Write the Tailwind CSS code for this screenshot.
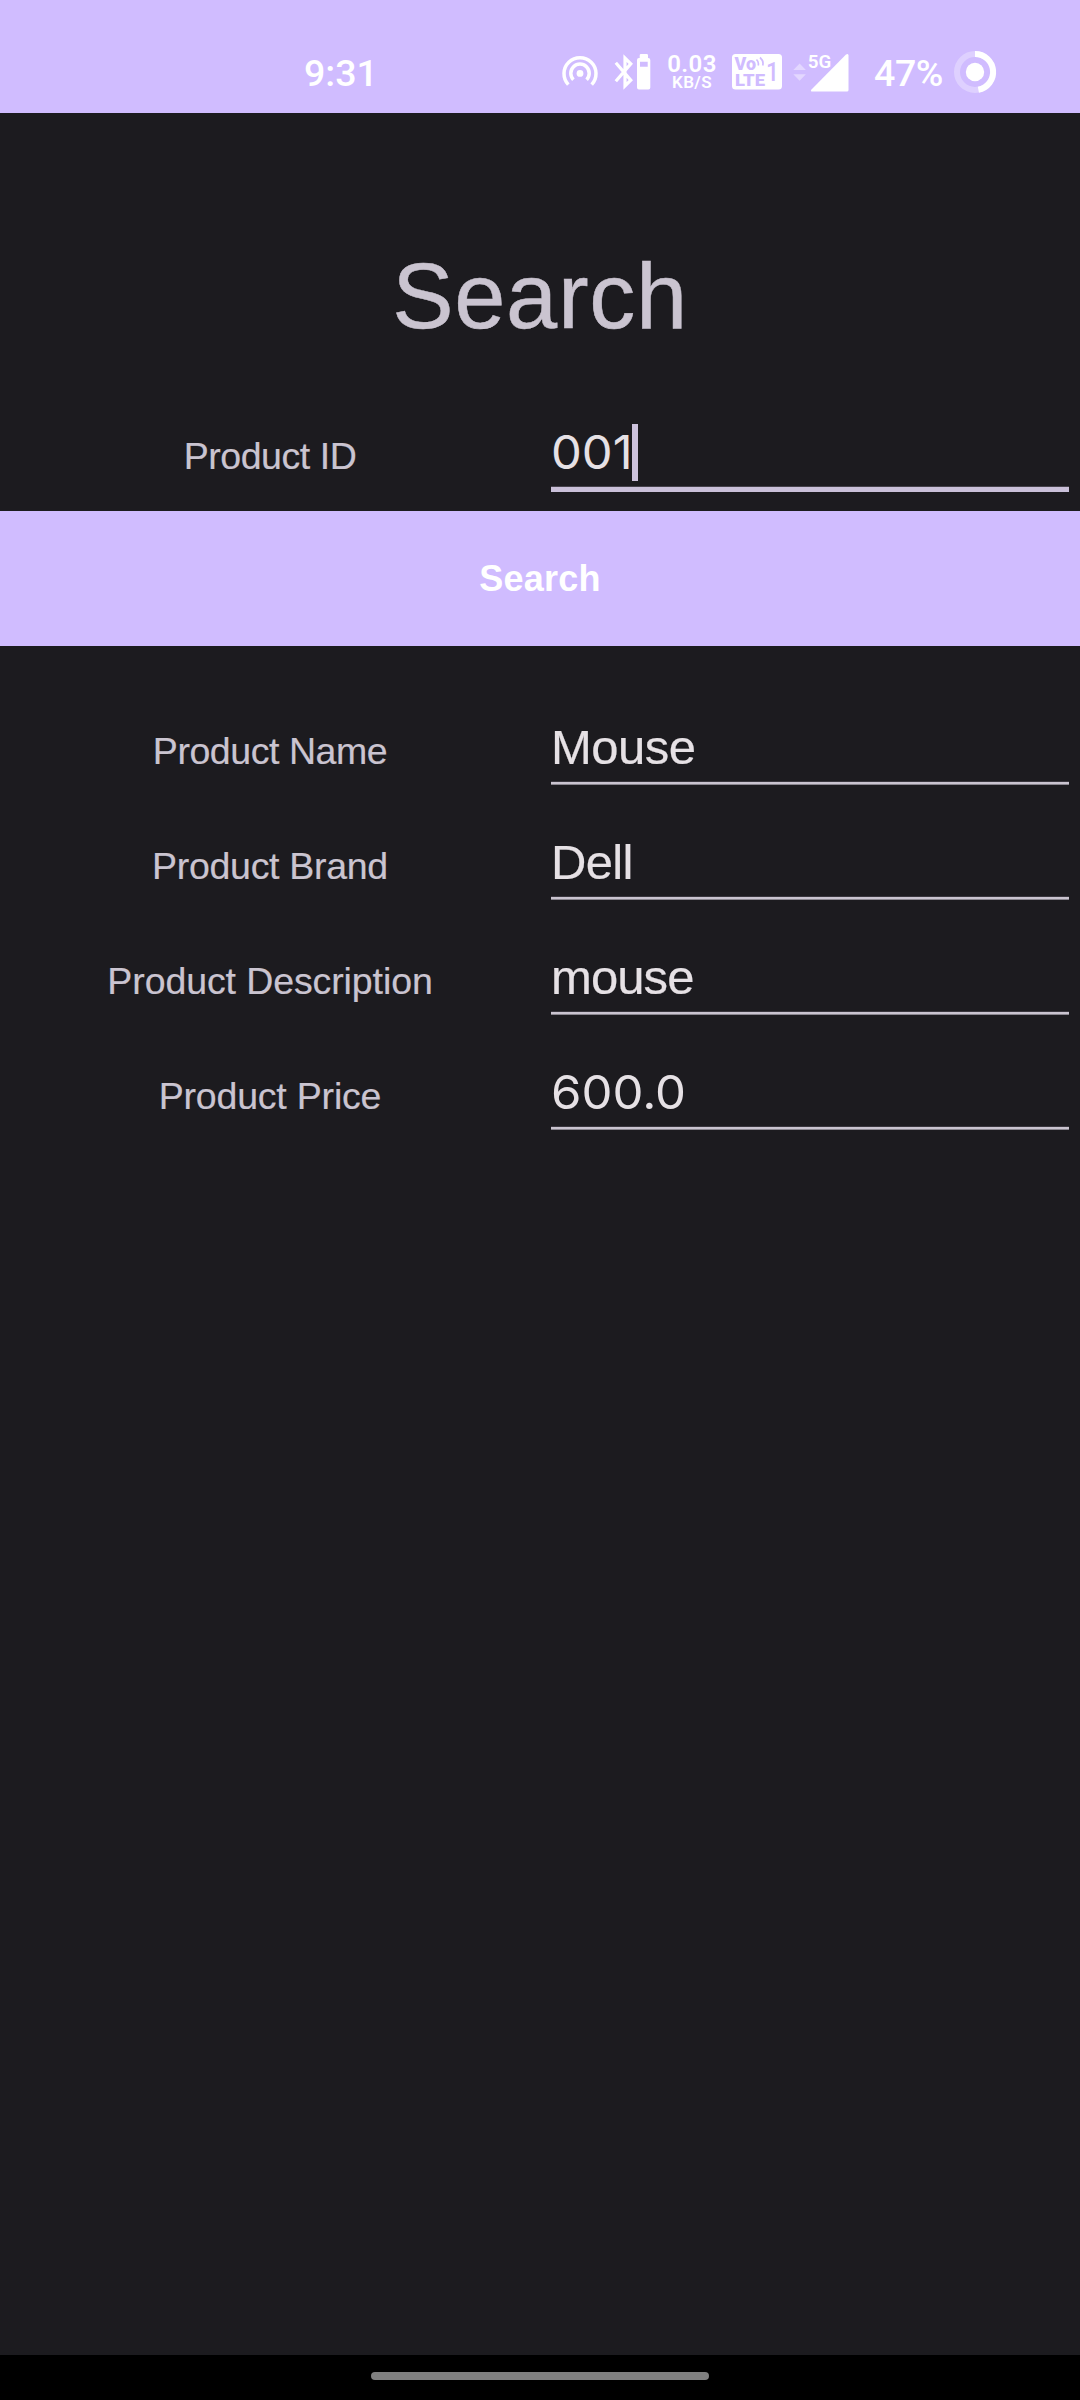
<!DOCTYPE html>
<html lang="en">
<head>
<meta charset="utf-8">
<title>Search</title>
<script src="https://cdn.jsdelivr.net/npm/@tailwindcss/browser@4"></script>
</head>
<body class="bg-[#1c1b1f]">
<div class="flex h-[2400px] w-[1080px] flex-col overflow-hidden bg-[#1c1b1f] font-['Liberation_Sans',Arial,sans-serif] text-[#cac4d0]">

  <!-- Status bar -->
  <header class="flex h-[113px] shrink-0 items-start bg-[#d0bcff] pt-[52px] pl-[304px] text-white">
    <div class="mt-px w-[256px] font-['Roboto',sans-serif] text-[37.5px] leading-10 font-medium">9:31</div>

    <svg class="h-10 w-10 shrink-0" viewBox="560 52 40 40" fill="none" stroke="#fff" stroke-width="3.5">
      <path d="M568.3 84.6A16 16 0 1 1 591.7 84.6"/>
      <path d="M573.4 79.7A9.2 9.2 0 1 1 586.6 79.7"/>
      <circle cx="580" cy="73.4" r="3.4" fill="#fff" stroke="none"/>
    </svg>

    <svg class="ml-3 h-10 w-10 shrink-0" viewBox="612 52 40 40" fill="none">
      <path d="M615.8 62.8L630.8 80.2L625 86V58L630.8 63.8L615.8 81.2" stroke="#fff" stroke-width="3.2"/>
      <path fill="#fff" fill-rule="evenodd" d="M641 54h5.7q1.3 0 1.3 1.3V58h.3q2 0 2 2v27.5q0 2-2 2H639q-2 0-2-2V60q0-2 2-2h.7v-2.7q0-1.3 1.3-1.3zM640 61.7v5h7.7v-5z"/>
    </svg>

    <div class="ml-3.5 flex w-[52px] shrink-0 flex-col items-center pt-[2px] font-['Roboto',sans-serif] font-semibold">
      <span class="text-[24px] leading-5 tracking-[0.4px]">0.03</span>
      <span class="mt-px text-[17px] leading-[15px] tracking-[0.4px]">KB/S</span>
    </div>

    <svg class="ml-3 h-10 w-[54px] shrink-0" viewBox="730 52 54 40">
      <rect x="732" y="54" width="50" height="35.5" rx="3.5" fill="#fff"/>
      <g fill="#d0bcff" font-family="Roboto, sans-serif" font-weight="900">
        <text x="734.5" y="70" font-size="17.5" textLength="21.5" lengthAdjust="spacingAndGlyphs">Vo</text>
        <text x="735" y="86" font-size="17" textLength="30" lengthAdjust="spacingAndGlyphs">LTE</text>
        <text x="766" y="81" font-size="25" font-weight="500" textLength="13" lengthAdjust="spacingAndGlyphs">1</text>
      </g>
      <path d="M756.5 59.5q2.6 2.5 1.7 6M760 57.5q4 3.5 2.7 8" fill="none" stroke="#d0bcff" stroke-width="1.7"/>
    </svg>

    <svg class="ml-2 h-10 w-[60px] shrink-0" viewBox="792 52 60 40" fill="#fff">
      <path d="M799.6 63.5l6.3 6.6h-12.6zM799.6 80.8l6.3-6.6h-12.6z" fill-opacity=".4"/>
      <text x="807.8" y="68" font-family="Roboto, sans-serif" font-weight="600" font-size="18" textLength="23.5" lengthAdjust="spacingAndGlyphs">5G</text>
      <path d="M846 54.6q2.5-1.6 2.5 1V90q0 1.5-1.5 1.5h-34.5q-2.6 0-1-2z"/>
    </svg>

    <div class="mt-px ml-[22px] w-[78px] shrink-0 font-['Roboto',sans-serif] text-[37.5px] leading-10 font-medium tracking-[-0.4px]">47%</div>

    <svg class="-mt-0.5 h-11 w-[46px] shrink-0" viewBox="952 50 46 44" fill="none">
      <circle cx="975" cy="72" r="18" stroke="#fff" stroke-opacity=".3" stroke-width="6"/>
      <path d="M975 54A18 18 0 0 1 978.4 89.7" stroke="#fff" stroke-width="6"/>
      <circle cx="975" cy="72" r="9.2" fill="#fff"/>
    </svg>
  </header>

  <main class="flex grow flex-col">
    <h1 class="h-[283px] pt-[137px] text-center text-[92px] leading-[92px] tracking-[0.7px] [-webkit-text-stroke:0.5px]">Search</h1>

    <div class="grid h-[115px] grid-cols-2">
      <label class="pt-10 text-center text-[37.5px] leading-10 tracking-[-0.45px] [-webkit-text-stroke:0.2px]">Product ID</label>
      <div class="relative pt-9 pr-[11px] pl-[11px] text-[#e6e1e5]">
        <div class="h-[54px] w-fit origin-left scale-x-[1.04] font-['Inter',sans-serif] text-[47px] leading-10">001</div>
        <div class="h-1.5 border-t border-[#45414a] bg-[#cac0d9]"></div>
        <div class="absolute top-7 left-[92px] h-[57px] w-1.5 bg-[#cdc2dc]"></div>
      </div>
    </div>

    <button class="h-[135px] bg-[#d0bcff] text-center text-[36px] leading-10 font-bold tracking-[0.2px] text-white">Search</button>

    <section class="mt-[45px] flex flex-col">
      <div class="grid h-[115px] grid-cols-2">
        <label class="pt-10 text-center text-[37.5px] leading-10 tracking-[-0.45px] [-webkit-text-stroke:0.2px]">Product Name</label>
        <div class="pt-9 pr-[11px] pl-[11px] text-[#e6e1e5]">
          <div class="h-[54px] text-[49px] leading-10 tracking-[-0.5px] [-webkit-text-stroke:0.2px]">Mouse</div>
          <div class="h-1 border-t border-b border-t-[#39363d] border-b-[#8a868f] bg-[#cac4d0]"></div>
        </div>
      </div>
      <div class="grid h-[115px] grid-cols-2">
        <label class="pt-10 text-center text-[37.5px] leading-10 tracking-[-0.3px] [-webkit-text-stroke:0.2px]">Product Brand</label>
        <div class="pt-9 pr-[11px] pl-[11px] text-[#e6e1e5]">
          <div class="h-[54px] text-[49px] leading-10 tracking-[-0.7px] [-webkit-text-stroke:0.2px]">Dell</div>
          <div class="h-1 border-t border-b border-t-[#39363d] border-b-[#8a868f] bg-[#cac4d0]"></div>
        </div>
      </div>
      <div class="grid h-[115px] grid-cols-2">
        <label class="pt-10 text-center text-[37.5px] leading-10 tracking-[-0.1px] [-webkit-text-stroke:0.2px]">Product Description</label>
        <div class="pt-9 pr-[11px] pl-[11px] text-[#e6e1e5]">
          <div class="h-[54px] text-[49px] leading-10 tracking-[-0.9px] [-webkit-text-stroke:0.2px]">mouse</div>
          <div class="h-1 border-t border-b border-t-[#39363d] border-b-[#8a868f] bg-[#cac4d0]"></div>
        </div>
      </div>
      <div class="grid h-[115px] grid-cols-2">
        <label class="pt-10 text-center text-[37.5px] leading-10 tracking-[-0.2px] [-webkit-text-stroke:0.2px]">Product Price</label>
        <div class="pt-9 pr-[11px] pl-[11px] text-[#e6e1e5]">
          <div class="h-[54px] w-fit origin-left scale-x-[1.045] font-['Inter',sans-serif] text-[47px] leading-10">600.0</div>
          <div class="h-1 border-t border-b border-t-[#39363d] border-b-[#8a868f] bg-[#cac4d0]"></div>
        </div>
      </div>
    </section>
  </main>

  <!-- Gesture navigation bar -->
  <footer class="flex h-[45px] shrink-0 justify-center bg-black pt-[17px]">
    <div class="h-2 w-[338px] rounded-full bg-[#808080]"></div>
  </footer>
</div>
</body>
</html>
